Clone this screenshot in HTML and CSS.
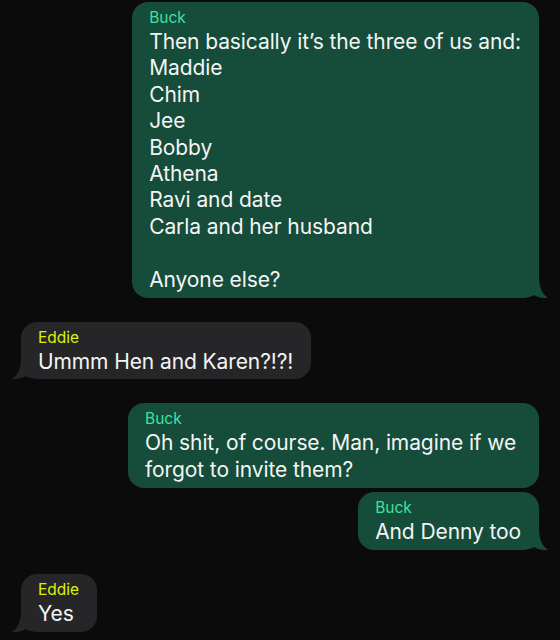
FILE: index.html
```html
<!DOCTYPE html>
<html>
<head>
<meta charset="utf-8">
<link rel="stylesheet" href="styles.css">
</head>
<body>
<div class="chat">
  <div class="row out">
    <div class="bubble green tail">
      <div class="name buck">Buck</div>
      <div class="text">Then basically it’s the three of us and:<br>Maddie<br>Chim<br>Jee<br>Bobby<br>Athena<br>Ravi and date<br>Carla and her husband<br><br>Anyone else?</div>
      <svg class="tail-r" width="20" height="22" viewBox="0 0 20 22"><path d="M0 0 H11 C11 11 14 18 20 22 C14 22.5 9 21 6 19 C4 20.5 2 21 0 21 Z" fill="#154c3a"/></svg>
    </div>
  </div>
  <div class="row in">
    <div class="bubble gray tail">
      <div class="name eddie">Eddie</div>
      <div class="text">Ummm Hen and Karen?!?!</div>
      <svg class="tail-l" width="20" height="22" viewBox="0 0 20 22"><path d="M20 0 H9 C9 11 6 18 0 22 C6 22.5 11 21 14 19 C16 20.5 18 21 20 21 Z" fill="#262628"/></svg>
    </div>
  </div>
  <div class="row out">
    <div class="bubble green wrap">
      <div class="name buck">Buck</div>
      <div class="text">Oh shit, of course. Man, imagine if we forgot to invite them?</div>
    </div>
  </div>
  <div class="row out grouped">
    <div class="bubble green tail">
      <div class="name buck">Buck</div>
      <div class="text">And Denny too</div>
      <svg class="tail-r" width="20" height="22" viewBox="0 0 20 22"><path d="M0 0 H11 C11 11 14 18 20 22 C14 22.5 9 21 6 19 C4 20.5 2 21 0 21 Z" fill="#154c3a"/></svg>
    </div>
  </div>
  <div class="row in">
    <div class="bubble gray tail">
      <div class="name eddie">Eddie</div>
      <div class="text">Yes</div>
      <svg class="tail-l" width="20" height="22" viewBox="0 0 20 22"><path d="M20 0 H9 C9 11 6 18 0 22 C6 22.5 11 21 14 19 C16 20.5 18 21 20 21 Z" fill="#262628"/></svg>
    </div>
  </div>
</div>
</body>
</html>
```
FILE: styles.css
```css
html, body {
  margin: 0;
  padding: 0;
  background: #0b0b0b;
  height: 100%;
}
body {
  font-family: Inter, "Noto Sans", sans-serif;
  color: #f4f4f4;
}
.chat {
  display: flex;
  flex-direction: column;
  gap: 24px;
  padding: 2px 21px 0 21px;
}
.row {
  display: flex;
}
.row.out {
  justify-content: flex-end;
}
.row.in {
  justify-content: flex-start;
}
.row.grouped {
  margin-top: -20px;
}
.bubble {
  position: relative;
  border-radius: 16px;
  padding: 7px 18px 4.5px 17px;
  max-width: 376px;
}
.bubble.wrap {
  width: 376px;
}
.green {
  background: #154c3a;
}
.gray {
  background: #262628;
}
.name {
  font-size: 15.5px;
  line-height: 18px;
  margin-bottom: 2px;
}
.buck {
  color: #3fe0a2;
}
.eddie {
  color: #d9f20a;
}
.text {
  font-size: 21px;
  line-height: 26.4px;
  letter-spacing: -0.1px;
}
.tail-r {
  position: absolute;
  right: -9px;
  bottom: 0;
}
.tail-l {
  position: absolute;
  left: -9px;
  bottom: 0;
}
```
